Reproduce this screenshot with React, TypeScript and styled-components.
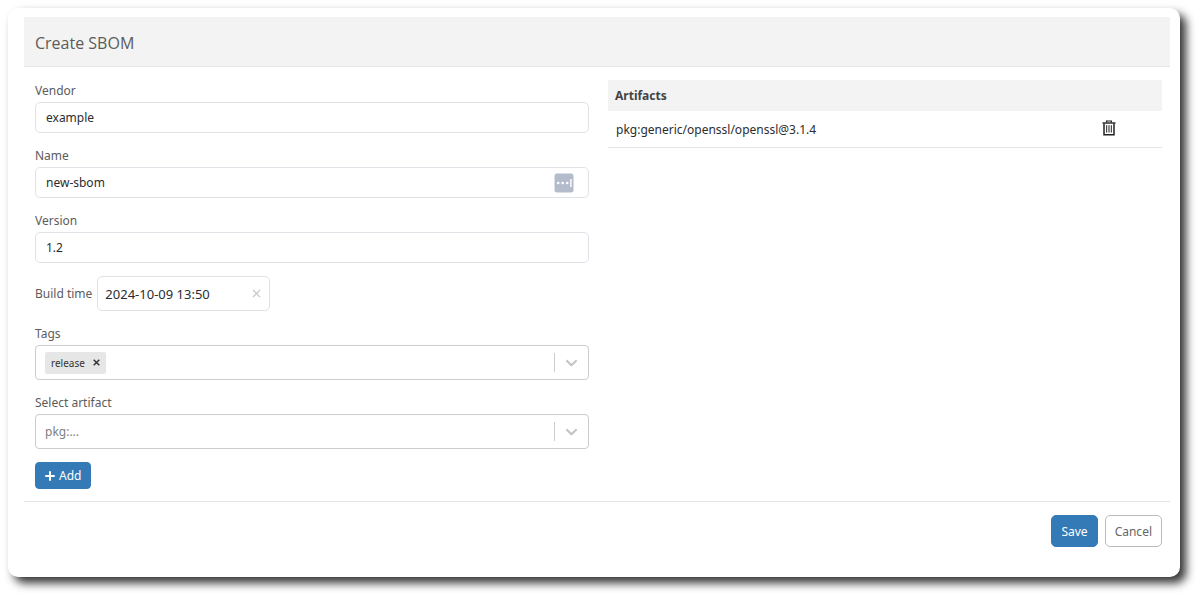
import React, { useState } from "react";
import styled, { createGlobalStyle, css } from "styled-components";

const GlobalStyle = createGlobalStyle`
  *, *::before, *::after { box-sizing: border-box; }
  body {
    margin: 0;
    background: #fff;
    color: #2a2d30;
    font-family: "Noto Sans", "Open Sans", sans-serif;
    font-size: 12px;
    line-height: 18px;
  }
  button, input, select { font: inherit; color: inherit; }
`;

const Card = styled.main`
  margin: 8px 20px 20px 8px;
  padding: 9px 10px 30px 16px;
  border-radius: 10px;
  background: #fff;
  box-shadow: 6px 6px 10px rgba(0, 0, 0, 0.8);
`;

const Header = styled.header`
  padding: 14px 11px 11px;
  background: #f3f3f3;
  border-bottom: 1px solid #e2e4e6;
`;

const Title = styled.h1`
  margin: 0;
  font-family: "Open Sans", "Noto Sans", sans-serif;
  font-size: 16px;
  line-height: 24px;
  font-weight: 400;
  color: #5c5c5c;
`;

const Body = styled.div`
  display: grid;
  grid-template-columns: 1fr 1fr;
  align-items: start;
  gap: 19px;
  padding: 13px 8px 12px 11px;
`;

const Form = styled.form`
  display: flex;
  flex-direction: column;
  align-items: stretch;
  gap: 13px;
  padding-top: 1px;
`;

const Field = styled.div<{ $inline?: boolean }>`
  display: flex;
  flex-direction: ${(p) => (p.$inline ? "row" : "column")};
  align-items: ${(p) => (p.$inline ? "center" : "stretch")};
  gap: ${(p) => (p.$inline ? "5px" : "2px")};
`;

const Label = styled.label`
  padding-top: 1px;
  color: #5c5c5c;
`;

const Control = styled.div<{ $kind?: "date" | "select" }>`
  display: flex;
  align-items: center;
  height: 31px;
  padding: 0 14px 0 10px;
  border: 1px solid #dfe3e8;
  border-radius: 5px;
  background: #fff;
  ${(p) =>
    p.$kind === "date" &&
    css`
      width: 173px;
      height: 35px;
      padding: 0 8px 0 7px;
      font-size: 13px;
    `}
  ${(p) =>
    p.$kind === "select" &&
    css`
      height: 35px;
      padding: 0 7px 0 9px;
      border-color: #ccc;
      border-radius: 4px;
    `}
`;

const TextInput = styled.input`
  flex: 1;
  min-width: 0;
  padding: 0;
  border: 0;
  outline: 0;
  background: transparent;
`;

const Select = styled.select`
  flex: 1;
  align-self: stretch;
  min-width: 0;
  padding: 1px 0 0;
  border: 0;
  outline: 0;
  appearance: none;
  background: transparent;
  color: #808080;
`;

const Separator = styled.span`
  width: 1px;
  height: 19px;
  margin-right: 7px;
  background: #ccc;
`;

const IconButton = styled.button`
  display: inline-flex;
  padding: 0;
  border: 0;
  background: transparent;
  cursor: pointer;
`;

const Chip = styled.span`
  display: inline-flex;
  align-items: center;
  gap: 8px;
  height: 22px;
  padding: 0 6px;
  border-radius: 2px;
  background: #e6e6e6;
  color: #333;
  font-size: 10px;
`;

const Button = styled.button<{ $variant?: "outline"; $small?: boolean }>`
  display: inline-flex;
  align-items: center;
  align-self: flex-start;
  gap: 4px;
  height: ${(p) => (p.$small ? "27px" : "32px")};
  padding: 1px 9px 0;
  border: 1px solid ${(p) => (p.$variant ? "#bbb" : "#337ab7")};
  border-radius: ${(p) => (p.$small ? "4px" : "5px")};
  background: ${(p) => (p.$variant ? "#fff" : "#337ab7")};
  color: ${(p) => (p.$variant ? "#666" : "#fff")};
  cursor: pointer;
`;

const Table = styled.table`
  width: 100%;
  border-spacing: 0;
`;

const HeadCell = styled.th`
  height: 31px;
  padding: 1px 7px 0;
  background: #f3f3f3;
  color: #444;
  font-weight: 700;
  text-align: left;
`;

const Cell = styled.td<{ $action?: boolean }>`
  width: ${(p) => (p.$action ? "68px" : "auto")};
  height: 37px;
  padding: 2px 8px 0;
  border-bottom: 1px solid #e2e5e9;
  line-height: 16px;
  vertical-align: middle;
`;

const Footer = styled.footer`
  display: flex;
  justify-content: flex-end;
  gap: 7px;
  padding: 13px 8px 0;
  border-top: 1px solid #e2e6ea;
`;

const Chevron = () => (
  <svg width="19" height="19" viewBox="0 0 20 20" fill="#c4c4c4" aria-hidden="true">
    <path d="M4.516 7.548c0.436-0.446 1.043-0.481 1.576 0l3.908 3.747 3.908-3.747c0.533-0.481 1.141-0.446 1.574 0 0.436 0.445 0.408 1.197 0 1.615-0.406 0.418-4.695 4.502-4.695 4.502-0.217 0.223-0.502 0.335-0.787 0.335s-0.57-0.112-0.789-0.335c0 0-4.287-4.084-4.695-4.502s-0.436-1.17 0-1.615z" />
  </svg>
);

const Cross = ({ size, color, weight }: { size: number; color: string; weight: number }) => (
  <svg width={size} height={size} viewBox="0 0 8 8" stroke={color} strokeWidth={weight} aria-hidden="true">
    <path d="M0.8 0.8 7.2 7.2M7.2 0.8 0.8 7.2" />
  </svg>
);

const Plus = () => (
  <svg width="10" height="10" viewBox="0 0 10 10" stroke="#fff" strokeWidth="2" strokeLinecap="round" aria-hidden="true">
    <path d="M5 1v8M1 5h8" />
  </svg>
);

const FillIcon = () => (
  <svg width="20" height="20" viewBox="0 0 20 20" aria-hidden="true">
    <rect x="0.5" y="0.5" width="19" height="19" rx="2.5" fill="#b4bccb" />
    <g fill="#fff">
      <circle cx="4.2" cy="10" r="1.3" />
      <circle cx="8.7" cy="10" r="1.3" />
      <circle cx="13.2" cy="10" r="1.3" />
      <rect x="16.2" y="6" width="1.4" height="8" />
    </g>
  </svg>
);

const Trash = () => (
  <svg width="14" height="16" viewBox="0 0 14 16" fill="none" stroke="#222" aria-hidden="true">
    <path d="M0.5 3h13" strokeWidth="1.4" />
    <path d="M4.6 2.6V1h4.8v1.6" strokeWidth="1.2" />
    <path d="M2 3.4v11.4h10V3.4" strokeWidth="1.5" />
    <path d="M4.7 5.2v7.4M7 5.2v7.4M9.3 5.2v7.4" strokeWidth="1" />
  </svg>
);

export default function App() {
  const [vendor, setVendor] = useState("example");
  const [name, setName] = useState("new-sbom");
  const [version, setVersion] = useState("1.2");
  const [buildTime, setBuildTime] = useState("2024-10-09 13:50");

  return (
    <>
      <GlobalStyle />
      <Card>
        <Header>
          <Title>Create SBOM</Title>
        </Header>
        <Body>
          <Form id="sbom" onSubmit={(e) => e.preventDefault()}>
            <Field>
              <Label htmlFor="vendor">Vendor</Label>
              <Control>
                <TextInput id="vendor" value={vendor} onChange={(e) => setVendor(e.target.value)} />
              </Control>
            </Field>
            <Field>
              <Label htmlFor="name">Name</Label>
              <Control>
                <TextInput id="name" value={name} onChange={(e) => setName(e.target.value)} />
                <IconButton type="button" aria-label="Fill in name">
                  <FillIcon />
                </IconButton>
              </Control>
            </Field>
            <Field>
              <Label htmlFor="version">Version</Label>
              <Control>
                <TextInput id="version" value={version} onChange={(e) => setVersion(e.target.value)} />
              </Control>
            </Field>
            <Field $inline>
              <Label htmlFor="build-time">Build time</Label>
              <Control $kind="date">
                <TextInput id="build-time" value={buildTime} onChange={(e) => setBuildTime(e.target.value)} />
                <IconButton type="button" aria-label="Clear build time" onClick={() => setBuildTime("")}>
                  <Cross size={9} color="#c8c8c8" weight={1.1} />
                </IconButton>
              </Control>
            </Field>
            <Field>
              <Label htmlFor="tags">Tags</Label>
              <Control $kind="select">
                <Chip>
                  release
                  <IconButton type="button" aria-label="Remove release">
                    <Cross size={7} color="#333" weight={1.7} />
                  </IconButton>
                </Chip>
                <TextInput id="tags" />
                <Separator />
                <IconButton type="button" aria-label="Show tags">
                  <Chevron />
                </IconButton>
              </Control>
            </Field>
            <Field>
              <Label htmlFor="artifact">Select artifact</Label>
              <Control $kind="select">
                <Select id="artifact">
                  <option>pkg:...</option>
                </Select>
                <Separator />
                <Chevron />
              </Control>
            </Field>
            <Button type="button" $small>
              <Plus />
              Add
            </Button>
          </Form>
          <Table>
            <thead>
              <tr>
                <HeadCell colSpan={2}>Artifacts</HeadCell>
              </tr>
            </thead>
            <tbody>
              <tr>
                <Cell>pkg:generic/openssl/openssl@3.1.4</Cell>
                <Cell $action>
                  <IconButton type="button" aria-label="Remove artifact">
                    <Trash />
                  </IconButton>
                </Cell>
              </tr>
            </tbody>
          </Table>
        </Body>
        <Footer>
          <Button type="submit" form="sbom">
            Save
          </Button>
          <Button type="button" $variant="outline">
            Cancel
          </Button>
        </Footer>
      </Card>
    </>
  );
}
